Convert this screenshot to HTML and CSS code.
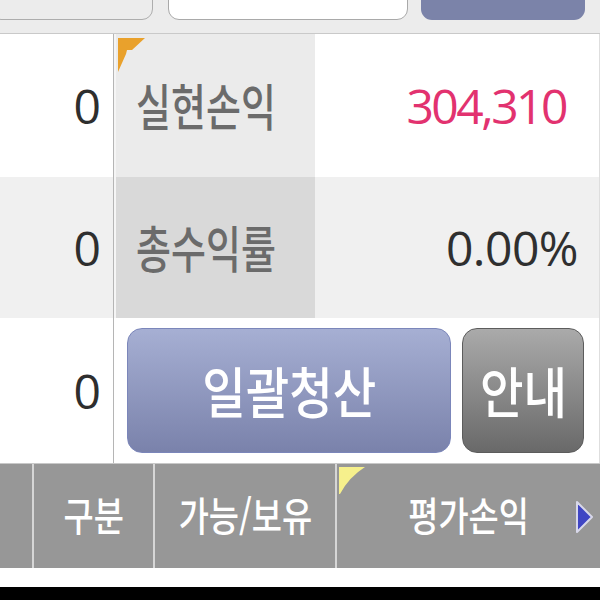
FILE: index.html
```html
<!DOCTYPE html>
<html lang="ko">
<head>
<meta charset="utf-8">
<title>잔고</title>
<link rel="stylesheet" href="styles.css">
</head>
<body>
<div class="screen">
  <div class="topbar">
    <div class="tb tb-left"></div>
    <div class="tb tb-input"></div>
    <div class="tb tb-blue"></div>
  </div>
  <div class="grid">
    <div class="cell num r1">0</div>
    <div class="cell label r1">
      <svg class="corner" width="27" height="34" viewBox="0 0 27 34"><polygon points="0,0 27,0 14,12 9,12 8,16 0,34" fill="#e9a12c"/></svg>
      <span class="ko">실현손익</span>
    </div>
    <div class="cell value r1 pink">304,310</div>
    <div class="cell num r2">0</div>
    <div class="cell label r2"><span class="ko">총수익률</span></div>
    <div class="cell value r2 pct">0.00%</div>
    <div class="cell num r3">0</div>
    <div class="cell actions r3">
      <button class="btn btn-blue"><span class="ko">일괄청산</span></button>
      <button class="btn btn-gray"><span class="ko">안내</span></button>
    </div>
  </div>
  <div class="header">
    <div class="hcol h1"></div>
    <div class="hcol h2"><span class="ko">구분</span></div>
    <div class="hcol h3"><span class="ko">가능/보유</span></div>
    <div class="hcol h4">
      <svg class="flag" width="26" height="27" viewBox="0 0 26 27"><path d="M0,0 L26,0 Q10,10 1,27 L0,27 Z" fill="#f6f08c"/></svg>
      <span class="ko">평가손익</span>
      <svg class="arrow" width="19" height="34" viewBox="0 0 19 34"><path d="M2,2 L17,17 L2,32 Z" fill="#3f45c4" stroke="#d8d8ea" stroke-width="2" stroke-linejoin="round"/></svg>
    </div>
  </div>
  <div class="foot-white"></div>
  <div class="foot-black"></div>
</div>
</body>
</html>
```

FILE: styles.css
```css
* { box-sizing: border-box; }
html, body { margin: 0; padding: 0; background: #000; }
body { width: 600px; height: 600px; overflow: hidden; font-family: "Open Sans", "Noto Sans CJK KR", sans-serif; }

.screen { width: 600px; height: 600px; display: flex; flex-direction: column; background: #fff; }

.topbar {
  height: 34px;
  background: #ececec;
  border-bottom: 1px solid #c9c9c9;
  display: flex;
  align-items: flex-start;
  flex: none;
}
.tb { height: 40px; margin-top: -20px; border-radius: 11px; flex: none; }
.tb-left { margin-left: -10px; width: 163px; background: #ececec; border: 1px solid #adadad; }
.tb-input { margin-left: 15px; width: 240px; background: #fff; border: 1px solid #a9a9a9; }
.tb-blue { margin-left: 13px; width: 164px; background: #7b83a9; }

.grid {
  display: grid;
  grid-template-columns: 114px 201px 1fr;
  grid-template-rows: 143px 141px 145px;
  flex: none;
  border-right: 1px solid #dedede;
}
.cell { display: flex; align-items: center; position: relative; }
.r1 { background: #fff; }
.r2 { background: #f0f0f0; }
.r3 { background: #fff; }

.num {
  border-right: 1px solid #b5b5b5;
  justify-content: flex-end;
  padding-right: 12px;
  font-size: 48px;
  color: #2e2e2e;
}
.label {
  border-left: 2px solid #f5f5f5;
  padding-left: 20px;
  color: #6b6b6b;
  font-size: 50px;
}
.label.r1 { background: #ebebeb; }
.label.r2 { background: #d9d9d9; }
.label .ko { display: inline-block; transform: scaleX(0.76); transform-origin: left center; white-space: nowrap; font-family: "Noto Sans CJK KR", sans-serif; font-weight: 500; margin-top: -4px; }
.corner { position: absolute; left: 2px; top: 4px; }

.value { justify-content: flex-end; font-size: 48px; color: #2f2f2f; }
.value.pink { color: #e2326f; padding-right: 33px; letter-spacing: -2.5px; }
.value.pct { padding-right: 21px; letter-spacing: -0.5px; }

.actions {
  grid-column: 2 / 4;
  padding: 10px 15px 10px 13px;
  gap: 11px;
  align-items: stretch;
}
.btn {
  border-radius: 15px;
  font-family: "Noto Sans CJK KR", sans-serif;
  font-weight: 500;
  color: #fff;
  padding: 0;
  display: flex;
  align-items: center;
  justify-content: center;
}
.btn .ko { display: inline-block; transform: scaleX(0.86); white-space: nowrap; margin-top: -4px; }
.btn-blue {
  width: 325px;
  font-size: 55px;
  background: linear-gradient(#a6afd3, #7a82ab);
  border: 1px solid #7b86ba;
}
.btn-gray {
  width: 122px;
  font-size: 55px;
  background: linear-gradient(#aaaaaa, #696969);
  border: 1px solid #5c5c5c;
}

.header {
  height: 105px;
  flex: none;
  display: flex;
  background: #979797;
  border-top: 1px solid #c8c8c8;
  font-family: "Noto Sans CJK KR", sans-serif;
  font-weight: 500;
  color: #fff;
  font-size: 40px;
}
.hcol { display: flex; align-items: center; justify-content: center; position: relative; }
.hcol .ko { display: inline-block; transform: scaleX(0.82); white-space: nowrap; margin-top: -4px; }
.h1 { width: 32px; }
.h2 { width: 121px; border-left: 2px solid #d6d6d6; }
.h3 { width: 182px; border-left: 2px solid #d6d6d6; }
.h4 { flex: 1; border-left: 2px solid #d6d6d6; }
.flag { position: absolute; left: 2px; top: 3px; }
.arrow { position: absolute; left: 238px; top: 36px; }

.foot-white { height: 19px; background: #fff; flex: none; }
.foot-black { flex: 1; background: #000; }
```
